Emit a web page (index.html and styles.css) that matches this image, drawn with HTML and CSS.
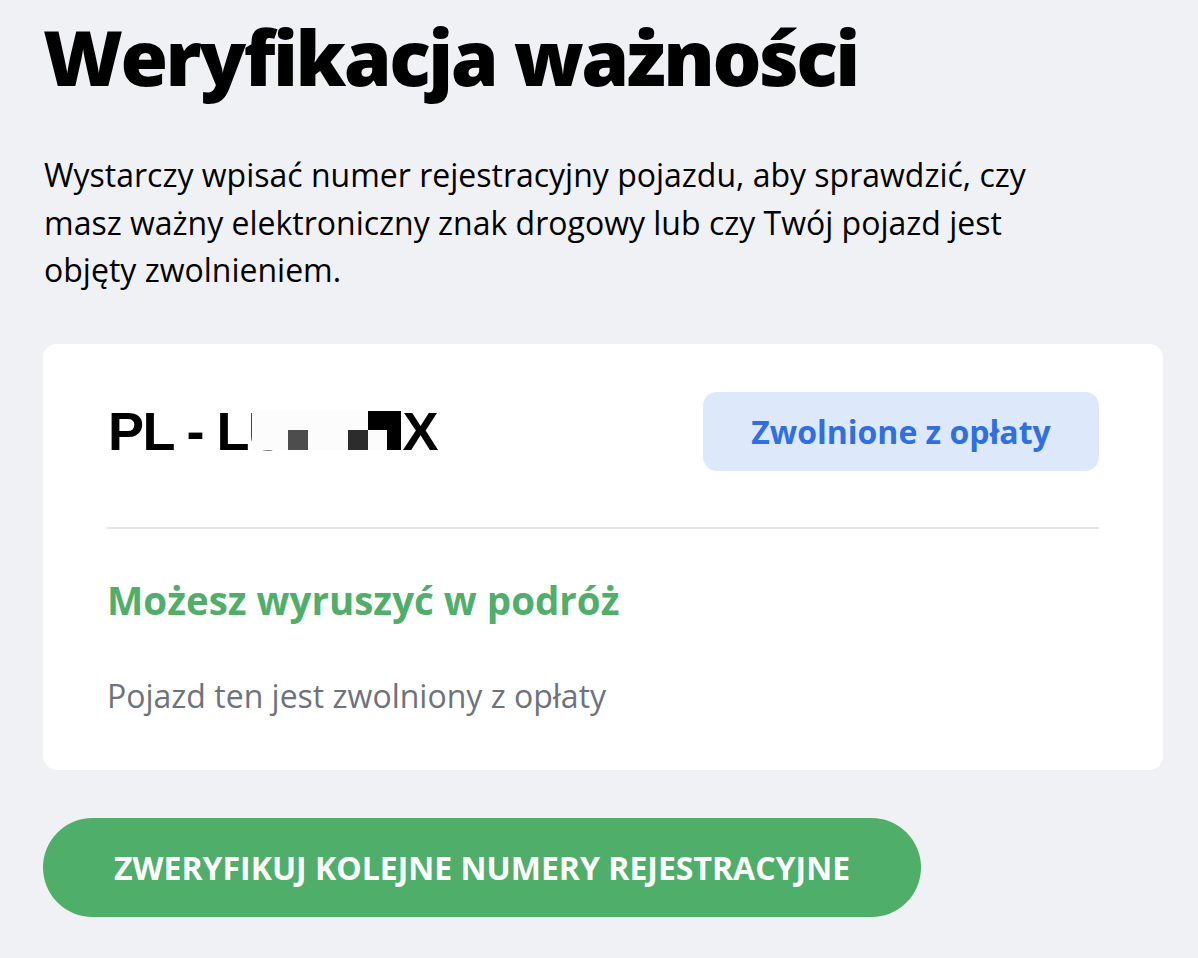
FILE: index.html
```html
<!DOCTYPE html>
<html lang="pl">
<head>
	<meta charset="UTF-8">
	<title>Weryfikacja ważności</title>
	<link rel="stylesheet" href="styles.css">
</head>
<body>
	<div class="page">
		<h1 class="title">Weryfikacja ważności</h1>
		<p class="intro">Wystarczy wpisać numer rejestracyjny pojazdu, aby sprawdzić, czy masz ważny elektroniczny znak drogowy lub czy Twój pojazd jest objęty zwolnieniem.</p>

		<!-- wynik -->
		<div class="card">
			<div class="card-top">
				<div class="plate">PL - LU<span class="mosaic">
						<span class="row"><i class="w" style="width:116px"></i><i class="k" style="width:33px"></i></span>
						<span class="row"><i class="w" style="width:36px"></i><i class="g1" style="width:20px"></i><i class="w" style="width:40px"></i><i class="g2" style="width:20px"></i><i class="w" style="width:19px"></i><i class="k" style="width:14px"></i></span>
					</span>X</div>
				<div class="badge">Zwolnione z opłaty</div>
			</div>
			<div class="line"></div>
			<h2 class="ok">Możesz wyruszyć w podróż</h2>
			<p class="note">Pojazd ten jest zwolniony z opłaty</p>
		</div>

		<a href="javascript:;" class="btn">Zweryfikuj kolejne numery rejestracyjne</a>
	</div>
</body>
</html>
```

FILE: styles.css
```css
*{
	margin: 0;padding: 0;
}
body{
	background: #f0f1f5;
	font-family: "Open Sans", "Noto Sans", sans-serif;
	color: #000;
}
.page{
	padding: 7px 35px 40px 43px;
}
.title{
	font-size: 77px;
	font-weight: 800;
	line-height: 100px;
	letter-spacing: -2.5px;
}
.intro{
	margin-top: 44px;
	max-width: 1010px;
	font-size: 32px;
	line-height: 47.5px;
	padding-left: 1px;
}
.card{
	margin-top: 50px;
	background: #fff;
	border-radius: 14px;
	padding: 48px 64px 52px 64px;
}
.card-top{
	display: flex;
	justify-content: space-between;
	align-items: center;
}
.plate{
	font-family: "Liberation Sans", Arial, sans-serif;
	font-weight: 700;
	font-size: 54px;
	letter-spacing: -1.5px;
	line-height: 60px;
	padding-left: 1px;
	white-space: nowrap;
}
.mosaic{
	display: inline-block;
	vertical-align: baseline;
	margin-left: -34px;
	margin-right: 2px;
}
.mosaic .row{
	display: flex;
	height: 19px;
}
.mosaic .row + .row{
	height: 20px;
}
.mosaic i{
	display: block;
}
.mosaic .w{
	background: #fcfcfc;
}
.mosaic .k{
	background: #000;
}
.mosaic .g1{
	background: #4d4d4d;
}
.mosaic .g2{
	background: #2c2c2c;
}
.badge{
	width: 396px;
	height: 79px;
	line-height: 79px;
	text-align: center;
	background: #dde8fa;
	border-radius: 14px;
	color: #2f6ee3;
	font-size: 32px;
	font-weight: 700;
}
.line{
	height: 2px;
	background: #e3e4e6;
	margin-top: 56px;
}
.ok{
	margin-top: 47px;
	color: #50ae6b;
	font-size: 38.5px;
	font-weight: 700;
	line-height: 48px;
}
.note{
	margin-top: 50px;
	color: #6d727c;
	font-size: 32px;
	line-height: 44px;
}
.btn{
	display: inline-block;
	margin-top: 48px;
	background: #50ae6b;
	color: #fff;
	text-decoration: none;
	text-transform: uppercase;
	font-size: 32px;
	font-weight: 700;
	height: 99px;
	line-height: 99px;
	padding: 0 71px;
	border-radius: 50px;
}
```
